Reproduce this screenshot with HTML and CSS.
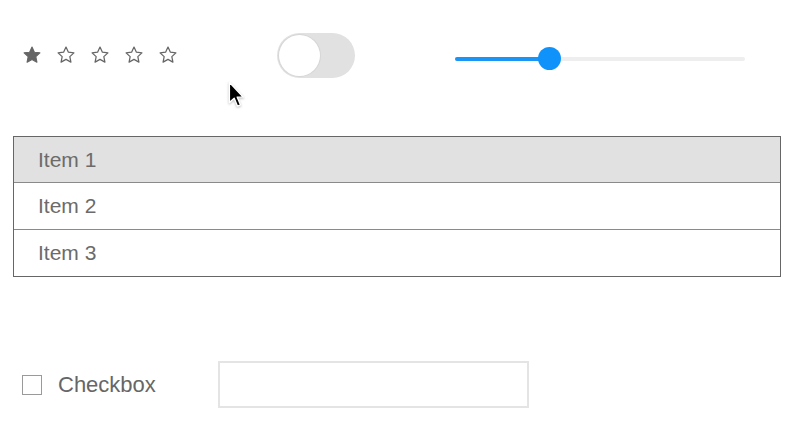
FILE: index.html
```html
<!DOCTYPE html>
<html>
<head>
<meta charset="utf-8">
<link rel="stylesheet" href="styles.css">
</head>
<body>
<div class="page">
  <div class="top">
    <div class="stars">
      <svg class="star" viewBox="0 0 24 24"><path class="filled" d="M12 2.5l2.9 6.1 6.6.8-4.9 4.6 1.3 6.6L12 17.3l-5.9 3.3 1.3-6.6-4.9-4.6 6.6-.8z"/></svg>
      <svg class="star" viewBox="0 0 24 24"><path class="outline" d="M12 2.5l2.9 6.1 6.6.8-4.9 4.6 1.3 6.6L12 17.3l-5.9 3.3 1.3-6.6-4.9-4.6 6.6-.8z"/></svg>
      <svg class="star" viewBox="0 0 24 24"><path class="outline" d="M12 2.5l2.9 6.1 6.6.8-4.9 4.6 1.3 6.6L12 17.3l-5.9 3.3 1.3-6.6-4.9-4.6 6.6-.8z"/></svg>
      <svg class="star" viewBox="0 0 24 24"><path class="outline" d="M12 2.5l2.9 6.1 6.6.8-4.9 4.6 1.3 6.6L12 17.3l-5.9 3.3 1.3-6.6-4.9-4.6 6.6-.8z"/></svg>
      <svg class="star" viewBox="0 0 24 24"><path class="outline" d="M12 2.5l2.9 6.1 6.6.8-4.9 4.6 1.3 6.6L12 17.3l-5.9 3.3 1.3-6.6-4.9-4.6 6.6-.8z"/></svg>
    </div>
    <div class="toggle"><div class="knob"></div></div>
    <div class="slider">
      <div class="track"><div class="fill" style="width:94px"></div></div>
      <div class="thumb" style="left:83px"></div>
    </div>
    <svg class="cursor" viewBox="0 0 14 22" width="18" height="28"><path d="M1 1 L1 17 L4.8 13.6 L7.4 19.8 L9.8 18.8 L7.2 12.7 L12 12.7 Z" fill="#000" stroke="#fff" stroke-width="1.1" stroke-linejoin="round"/></svg>
  </div>

  <div class="list">
    <div class="row selected">Item 1</div>
    <div class="row">Item 2</div>
    <div class="row">Item 3</div>
  </div>

  <div class="form">
    <span class="checkbox"></span>
    <span class="label">Checkbox</span>
    <input class="field" type="text">
  </div>
</div>
</body>
</html>
```

FILE: styles.css
```css
html, body {
  margin: 0;
  padding: 0;
  background: #fff;
}
body {
  font-family: "Liberation Sans", Arial, Helvetica, sans-serif;
  color: #666;
}
.page {
  padding: 33px 19px 0 13px;
}
.top {
  position: relative;
  display: flex;
  align-items: center;
  height: 45px;
  padding-left: 9px;
}
.stars {
  display: flex;
  gap: 15px;
  margin-top: -2px;
}
.star {
  width: 20px;
  height: 20px;
  display: block;
}
.star + .star {
  margin-left: -1px;
}
.star .filled {
  fill: #666;
  stroke: #666;
  stroke-width: 1.3;
  stroke-linejoin: round;
}
.star .outline {
  fill: none;
  stroke: #666;
  stroke-width: 1.5;
  stroke-linejoin: round;
}
.toggle {
  margin-left: 99px;
  width: 78px;
  height: 45px;
  border-radius: 23px;
  background: #e1e1e1;
  display: flex;
  align-items: center;
  padding-left: 2px;
  box-sizing: border-box;
}
.knob {
  width: 41px;
  height: 41px;
  border-radius: 50%;
  background: #fff;
  box-shadow: 0 0 0 1px #d6d6d6;
}
.slider {
  position: relative;
  margin-left: 100px;
  margin-top: 6px;
  width: 290px;
  height: 23px;
  display: flex;
  align-items: center;
}
.track {
  width: 100%;
  height: 4px;
  border-radius: 2px;
  background: #eeeeee;
}
.fill {
  height: 4px;
  border-radius: 2px;
  background: #1a94f5;
}
.thumb {
  position: absolute;
  top: 0;
  width: 23px;
  height: 23px;
  border-radius: 50%;
  background: #0f93fb;
}
.cursor {
  position: absolute;
  left: 215px;
  top: 48px;
  filter: drop-shadow(0 1px 1px rgba(0,0,0,0.25));
}
.list {
  margin-top: 58px;
  border: 1px solid #666;
}
.row {
  height: 46px;
  display: flex;
  align-items: center;
  padding-left: 24px;
  font-size: 21px;
  color: #6b6b6b;
  border-top: 1px solid #8a8a8a;
}
.row:first-child {
  border-top: 0;
  height: 45px;
}
.row.selected {
  background: #e0e1e0;
}
.form {
  margin-top: 84px;
  display: flex;
  align-items: center;
  height: 47px;
  padding-left: 9px;
}
.checkbox {
  width: 18px;
  height: 18px;
  border: 1px solid #9a9a9a;
  margin-right: 16px;
}
.label {
  width: 160px;
  font-size: 22px;
  color: #666;
}
.field {
  width: 311px;
  height: 47px;
  box-sizing: border-box;
  border: 2px solid #e4e4e4;
  margin: 0;
  padding: 0 8px;
  outline: none;
  background: #fff;
}
```
